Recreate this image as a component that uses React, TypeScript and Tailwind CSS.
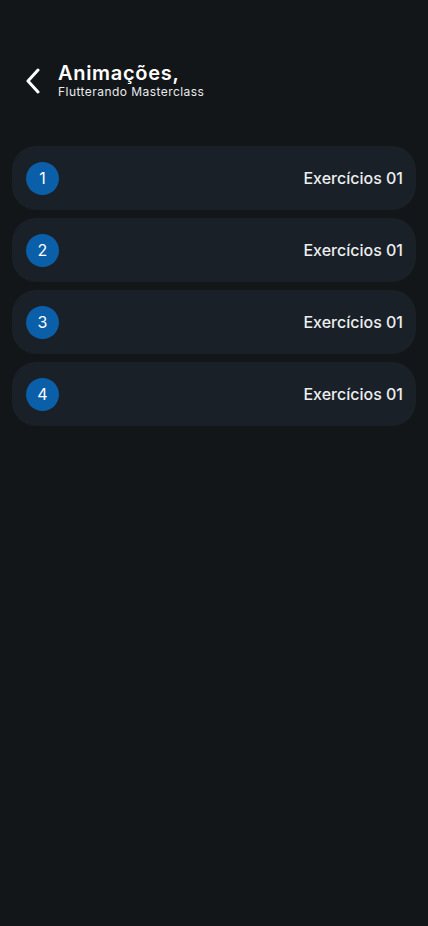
export default function App() {
  const items = [1, 2, 3, 4]

  return (
    <div
      className="min-h-[926px] w-full bg-[#131619] text-white"
      style={{ fontFamily: "Inter, 'Noto Sans', sans-serif" }}
    >
      {/* Header */}
      <header className="flex items-center pt-[62px] pl-[24px]">
        <svg width="18" height="26" viewBox="0 0 18 26" fill="none" className="mr-[16px]">
          <path d="M14 2 L4 13 L14 24" stroke="#ffffff" strokeWidth="3" strokeLinecap="round" strokeLinejoin="round" />
        </svg>
        <div className="flex flex-col">
          <h1 className="text-[20px] leading-[22px] font-semibold tracking-[0.7px]">Animações,</h1>
          <p className="text-[12px] leading-[15px] tracking-[0.45px] text-[#e8eaec]">Flutterando Masterclass</p>
        </div>
      </header>

      {/* Lista */}
      <div className="mt-[47px] flex flex-col gap-[8px] px-[12px]">
        {items.map((n) => (
          <div
            key={n}
            className="flex h-[64px] items-center justify-between rounded-[24px] bg-[#1a2027] pl-[14px] pr-[13px]"
          >
            <div className="flex h-[33px] w-[33px] items-center justify-center rounded-full bg-[#0b5ea8] text-[16px] font-normal">
              {n}
            </div>
            <span className="text-[16px] font-medium text-[#eceef0]">Exercícios 01</span>
          </div>
        ))}
      </div>
    </div>
  )
}
